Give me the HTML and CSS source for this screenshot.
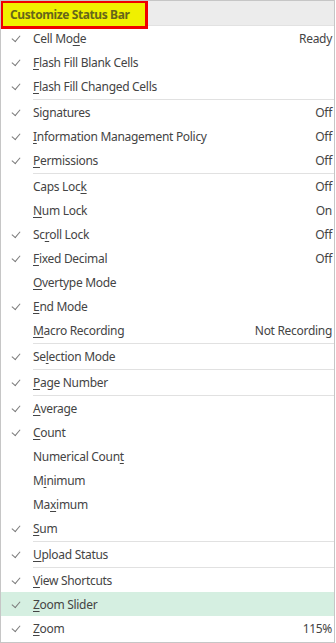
FILE: index.html
```html
<!DOCTYPE html>
<html lang="en">
<head>
    <meta charset="UTF-8">
    <meta name="viewport" content="width=device-width, initial-scale=1.0">
    <title>Customize Status Bar</title>
    <link rel="stylesheet" href="styles.css">
</head>
<body>

    <div class="status-menu">
        <div class="menu-header">
            <span class="header-mark">Customize Status Bar</span>
        </div>

        <ul class="menu-list">
            <li class="item checked"><span class="label">Cell Mo<u>d</u>e</span><span class="value">Ready</span></li>
            <li class="item checked"><span class="label"><u>F</u>lash Fill Blank Cells</span></li>
            <li class="item checked"><span class="label"><u>F</u>lash Fill Changed Cells</span></li>
            <li class="sep"></li>
            <li class="item checked"><span class="label">Signatures</span><span class="value">Off</span></li>
            <li class="item checked"><span class="label"><u>I</u>nformation Management Policy</span><span class="value">Off</span></li>
            <li class="item checked"><span class="label"><u>P</u>ermissions</span><span class="value">Off</span></li>
            <li class="sep"></li>
            <li class="item"><span class="label">Caps Loc<u>k</u></span><span class="value">Off</span></li>
            <li class="item"><span class="label"><u>N</u>um Lock</span><span class="value">On</span></li>
            <li class="item checked"><span class="label">Sc<u>r</u>oll Lock</span><span class="value">Off</span></li>
            <li class="item checked"><span class="label"><u>F</u>ixed Decimal</span><span class="value">Off</span></li>
            <li class="item"><span class="label"><u>O</u>vertype Mode</span></li>
            <li class="item checked"><span class="label"><u>E</u>nd Mode</span></li>
            <li class="item"><span class="label"><u>M</u>acro Recording</span><span class="value">Not Recording</span></li>
            <li class="sep"></li>
            <li class="item checked"><span class="label">Se<u>l</u>ection Mode</span></li>
            <li class="sep"></li>
            <li class="item checked"><span class="label"><u>P</u>age Number</span></li>
            <li class="sep"></li>
            <li class="item checked"><span class="label"><u>A</u>verage</span></li>
            <li class="item checked"><span class="label"><u>C</u>ount</span></li>
            <li class="item"><span class="label">Numerical Coun<u>t</u></span></li>
            <li class="item"><span class="label">M<u>i</u>nimum</span></li>
            <li class="item"><span class="label">Ma<u>x</u>imum</span></li>
            <li class="item checked"><span class="label"><u>S</u>um</span></li>
            <li class="sep"></li>
            <li class="item checked"><span class="label"><u>U</u>pload Status</span></li>
            <li class="sep"></li>
            <li class="item checked"><span class="label"><u>V</u>iew Shortcuts</span></li>
            <li class="item checked hover"><span class="label"><u>Z</u>oom Slider</span></li>
            <li class="item checked"><span class="label"><u>Z</u>oom</span><span class="value">115%</span></li>
        </ul>
    </div>

</body>
</html>
```

FILE: styles.css
```css
body {
    margin: 0;
    background-color: #fff;
    font-family: "Noto Sans", "Open Sans", Arial, sans-serif;
    font-size: 12px;
    letter-spacing: -0.3px;
    color: #444;
}

.status-menu {
    width: 333px;
    height: 641px;
    border: 1px solid #c6c6c6;
    background-color: #fff;
    overflow: hidden;
}

.menu-header {
    height: 25px;
    background-color: #ececec;
    border-bottom: 1px solid #e2e2e2;
    box-sizing: border-box;
    position: relative;
}

/* yellow highlight box drawn over the header */
.header-mark {
    position: absolute;
    left: 0;
    top: 0;
    width: 146px;
    height: 27px;
    padding: 2px 0 0 7px;
    box-sizing: border-box;
    background-color: #f0f000;
    border: 2px solid #f00000;
    outline: 1px solid #f00000;
    font-weight: bold;
    letter-spacing: -0.4px;
    color: #66661a;
    line-height: 19px;
}

.menu-list {
    list-style: none;
    margin: 0;
    padding: 0;
}

.item {
    display: flex;
    align-items: center;
    height: 24px;
    padding-left: 32px;
    padding-right: 2px;
    position: relative;
}

.item .label {
    flex: 1;
    white-space: nowrap;
}

.item .value {
    white-space: nowrap;
}

.item u {
    text-underline-offset: 2px;
}

.item.checked::before {
    content: "";
    position: absolute;
    left: 11px;
    top: 9px;
    width: 7px;
    height: 4px;
    border-left: 1.5px solid #7a7a7a;
    border-bottom: 1.5px solid #7a7a7a;
    transform: rotate(-50deg);
}

.item.hover {
    background-color: #d5efe1;
}

.sep {
    height: 1px;
    margin-left: 32px;
    border-bottom: 1px solid #e1e1e1;
}
```
